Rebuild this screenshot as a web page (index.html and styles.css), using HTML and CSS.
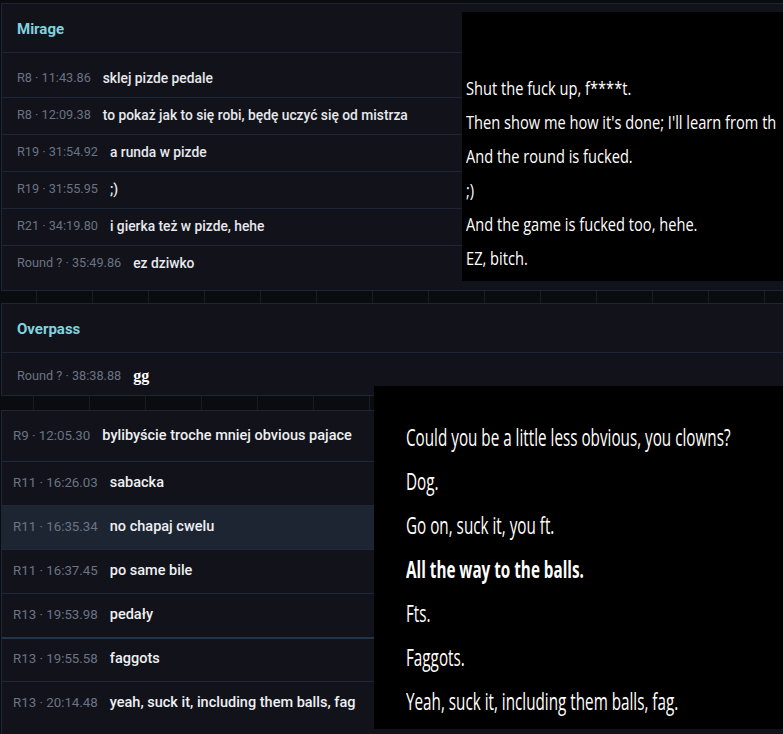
FILE: index.html
```html
<!DOCTYPE html>
<html lang="pl">
<head>
<meta charset="utf-8">
<title>Chat log</title>
<link rel="stylesheet" href="styles.css">
</head>
<body>
<div class="page">
  <section class="panel">
    <div class="panel-head"><h2>Mirage</h2></div>
    <ul class="rows">
      <li class="row"><span class="ts">R8 · 11:43.86</span><span class="msg">sklej pizde pedale</span></li>
      <li class="row"><span class="ts">R8 · 12:09.38</span><span class="msg">to pokaż jak to się robi, będę uczyć się od mistrza</span></li>
      <li class="row"><span class="ts">R19 · 31:54.92</span><span class="msg">a runda w pizde</span></li>
      <li class="row"><span class="ts">R19 · 31:55.95</span><span class="msg">;)</span></li>
      <li class="row"><span class="ts">R21 · 34:19.80</span><span class="msg">i gierka też w pizde, hehe</span></li>
      <li class="row"><span class="ts">Round ? · 35:49.86</span><span class="msg">ez dziwko</span></li>
    </ul>
  </section>
  <div class="strip"></div>
  <section class="panel panel-short">
    <div class="panel-head"><h2>Overpass</h2></div>
    <ul class="rows rows-short">
      <li class="row"><span class="ts">Round ? · 38:38.88</span><span class="msg msg-serif">gg</span></li>
    </ul>
  </section>
  <div class="strip strip-b"></div>
  <section class="lower">
    <ul class="lrows">
      <li class="lrow first"><span class="lts">R9 · 12:05.30</span><span class="lmsg">bylibyście troche mniej obvious pajace</span></li>
      <li class="lrow"><span class="lts">R11 · 16:26.03</span><span class="lmsg">sabacka</span></li>
      <li class="lrow active"><span class="lts">R11 · 16:35.34</span><span class="lmsg">no chapaj cwelu</span></li>
      <li class="lrow"><span class="lts">R11 · 16:37.45</span><span class="lmsg">po same bile</span></li>
      <li class="lrow"><span class="lts">R13 · 19:53.98</span><span class="lmsg">pedały</span></li>
      <li class="lrow strong-top"><span class="lts">R13 · 19:55.58</span><span class="lmsg">faggots</span></li>
      <li class="lrow"><span class="lts">R13 · 20:14.48</span><span class="lmsg">yeah, suck it, including them balls, fag</span></li>
    </ul>
  </section>

  <div class="overlay ov1">
    <div class="ov-text">
      <p>Shut the fuck up, f****t.</p>
      <p>Then show me how it's done; I'll learn from th</p>
      <p>And the round is fucked.</p>
      <p>;)</p>
      <p>And the game is fucked too, hehe.</p>
      <p>EZ, bitch.</p>
    </div>
  </div>
  <div class="overlay ov2">
    <div class="ov-text">
      <p>Could you be a little less obvious, you clowns?</p>
      <p>Dog.</p>
      <p>Go on, suck it, you ft.</p>
      <p class="b">All the way to the balls.</p>
      <p>Fts.</p>
      <p>Faggots.</p>
      <p>Yeah, suck it, including them balls, fag.</p>
    </div>
  </div>
</div>
</body>
</html>
```
FILE: styles.css
```css
* { box-sizing: border-box; }
html, body { margin: 0; padding: 0; }
body {
  background: #0b0c10;
  width: 783px;
  height: 734px;
  overflow: hidden;
  font-family: Roboto, "Noto Sans", sans-serif;
}
.page {
  position: relative;
  width: 783px;
  height: 734px;
  padding-top: 3px;
}
.panel {
  margin-left: 1px;
  background: #11121a;
  border: 1px solid #1d2636;
  border-right: none;
}
.panel-head {
  height: 49px;
  border-bottom: 1px solid #1d2636;
  display: flex;
  align-items: center;
  padding: 2px 0 0 15px;
}
.panel-head h2 {
  margin: 0;
  font-size: 15px;
  font-weight: 700;
  color: #80d3df;
}
.rows {
  list-style: none;
  margin: 0;
  padding: 8px 0 8px;
}
.rows-short { padding: 6px 0 0; }
.row {
  height: 37px;
  border-top: 1px solid #1d2636;
  display: flex;
  align-items: center;
  gap: 12px;
  padding: 0 0 3px 15px;
}
.row:first-child { border-top: none; height: 36px; }
.ts {
  font-size: 12.7px;
  color: #6b7383;
}
.msg {
  font-size: 13.8px;
  font-weight: 500;
  color: #e7e9ee;
}
.msg-serif {
  font-family: "Liberation Serif", serif;
  font-size: 16px;
  font-weight: 700;
  color: #ffffff;
}
.strip {
  height: 12px;
  background-color: #0b0c10;
  background-image: repeating-linear-gradient(90deg, transparent 0 36px, #1a1d26 36px 37px, transparent 37px 56px);
}
.strip-b {
  height: 14px;
  background-image: repeating-linear-gradient(90deg, transparent 0 33px, #1a1d26 33px 34px, transparent 34px 56px);
}
.lower {
  margin-left: 1px;
  background: #11121a;
  border-top: 1px solid #1d2636;
  border-left: 1px solid #1d2636;
  height: 324px;
}
.lrows { list-style: none; margin: 0; padding: 0; }
.lrow {
  height: 44px;
  border-top: 1px solid #1f2939;
  display: flex;
  align-items: center;
  gap: 12px;
  padding: 0 0 3px 11px;
}
.lrow.first { border-top: none; height: 50px; padding-top: 2px; }
.lrow.active { background: #1d2533; }
.lrow.strong-top { border-top: 2px solid #24344a; }
.lts {
  font-size: 13.3px;
  color: #6b7484;
}
.lmsg {
  font-size: 14.5px;
  font-weight: 500;
  color: #eef0f3;
}
.overlay {
  position: absolute;
  background: #000;
  overflow: hidden;
  color: #fff;
  font-family: "Open Sans", "Noto Sans", sans-serif;
  white-space: nowrap;
}
.overlay p { margin: 0; }
.ov1 {
  left: 462px;
  top: 12px;
  width: 321px;
  height: 269px;
  padding: 59px 0 0 4px;
}
.ov1 .ov-text {
  transform: scaleX(0.77);
  transform-origin: 0 0;
  font-size: 19px;
  line-height: 34px;
}
.ov2 {
  left: 374px;
  top: 386px;
  width: 409px;
  height: 343px;
  padding: 29px 0 0 32px;
}
.ov2 .ov-text {
  transform: scaleX(0.635);
  transform-origin: 0 0;
  font-size: 24px;
  line-height: 44px;
}
.ov2 .b { font-weight: 700; }
```
